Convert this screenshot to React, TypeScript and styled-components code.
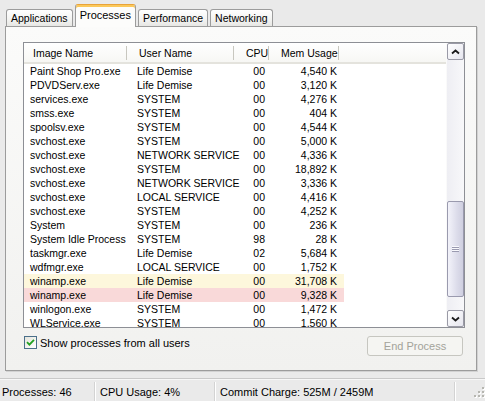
import React, { FunctionComponent } from "react";
import styled, { createGlobalStyle } from "styled-components";

const GlobalStyle = createGlobalStyle`
  html, body {
    margin: 0;
    padding: 0;
    background: #eaeaea;
  }
  body {
    font-family: "Liberation Sans", Arial, sans-serif;
    font-size: 10.5px;
    color: #000;
  }
`;

type Tone = "plain" | "yellow" | "pink";

interface Process {
  name: string;
  user: string;
  cpu: string;
  mem: string;
  tone?: Tone;
}

const processes: Process[] = [
  { name: "Paint Shop Pro.exe", user: "Life Demise", cpu: "00", mem: "4,540 K" },
  { name: "PDVDServ.exe", user: "Life Demise", cpu: "00", mem: "3,120 K" },
  { name: "services.exe", user: "SYSTEM", cpu: "00", mem: "4,276 K" },
  { name: "smss.exe", user: "SYSTEM", cpu: "00", mem: "404 K" },
  { name: "spoolsv.exe", user: "SYSTEM", cpu: "00", mem: "4,544 K" },
  { name: "svchost.exe", user: "SYSTEM", cpu: "00", mem: "5,000 K" },
  { name: "svchost.exe", user: "NETWORK SERVICE", cpu: "00", mem: "4,336 K" },
  { name: "svchost.exe", user: "SYSTEM", cpu: "00", mem: "18,892 K" },
  { name: "svchost.exe", user: "NETWORK SERVICE", cpu: "00", mem: "3,336 K" },
  { name: "svchost.exe", user: "LOCAL SERVICE", cpu: "00", mem: "4,416 K" },
  { name: "svchost.exe", user: "SYSTEM", cpu: "00", mem: "4,252 K" },
  { name: "System", user: "SYSTEM", cpu: "00", mem: "236 K" },
  { name: "System Idle Process", user: "SYSTEM", cpu: "98", mem: "28 K" },
  { name: "taskmgr.exe", user: "Life Demise", cpu: "02", mem: "5,684 K" },
  { name: "wdfmgr.exe", user: "LOCAL SERVICE", cpu: "00", mem: "1,752 K" },
  { name: "winamp.exe", user: "Life Demise", cpu: "00", mem: "31,708 K", tone: "yellow" },
  { name: "winamp.exe", user: "Life Demise", cpu: "00", mem: "9,328 K", tone: "pink" },
  { name: "winlogon.exe", user: "SYSTEM", cpu: "00", mem: "1,472 K" },
  { name: "WLService.exe", user: "SYSTEM", cpu: "00", mem: "1,560 K" },
];

const tabs = ["Applications", "Processes", "Performance", "Networking"];

// scroll state of the list: 46 processes, first visible is #26
const TOTAL = 46;
const FIRST = 26;
const VISIBLE = 17.7;
const TRACK = 250;

const toneColor: Record<Tone, string> = {
  plain: "transparent",
  yellow: "#fdf7dc",
  pink: "#f9d9d9",
};

const Window = styled.div`
  width: 485px;
  height: 401px;
  display: flex;
  flex-direction: column;
  background: #eaeaea;
  overflow: hidden;
`;

const Body = styled.div`
  display: flex;
  flex-direction: column;
  padding: 4px 8px 7px 5px;
  flex: 1;
`;

const TabStrip = styled.div`
  display: flex;
  align-items: flex-end;
  gap: 2px;
  height: 22px;
  padding-left: 1px;
`;

const Tab = styled.div<{ $active?: boolean }>`
  position: relative;
  z-index: ${(p) => (p.$active ? 2 : 1)};
  display: flex;
  align-items: center;
  box-sizing: border-box;
  height: ${(p) => (p.$active ? "23px" : "17px")};
  margin-bottom: ${(p) => (p.$active ? "-1px" : "0")};
  padding: ${(p) => (p.$active ? "0 4px 2px" : "0 4px")};
  border: 1px solid #9c9c9c;
  border-bottom: none;
  border-top-color: ${(p) => (p.$active ? "#e8a33a" : "#9c9c9c")};
  border-radius: 3px 3px 0 0;
  background: ${(p) =>
    p.$active
      ? "#fcfcfb"
      : "linear-gradient(#ffffff, #f3f3f1 60%, #e7e7e4)"};
  box-shadow: ${(p) => (p.$active ? "inset 0 2px 0 #fbc85a" : "none")};
  font-size: ${(p) => (p.$active ? "11px" : "10.5px")};
  white-space: nowrap;
`;

const Panel = styled.div`
  flex: 1;
  display: flex;
  flex-direction: column;
  border: 1px solid #9c9c9c;
  box-shadow: 1px 1px 0 #d2d2d2;
  background: linear-gradient(#fbfbfa, #f1f1ef);
  padding: 15px 11px 0 17px;
`;

const ListBox = styled.div`
  display: flex;
  height: 286px;
  box-sizing: border-box;
  border: 1px solid #8d8f95;
  background: #fff;
`;

const ListMain = styled.div`
  flex: 1;
  display: flex;
  flex-direction: column;
  overflow: hidden;
`;

const Header = styled.div`
  display: flex;
  height: 21px;
  box-sizing: border-box;
  flex-shrink: 0;
  background: linear-gradient(#ffffff, #f7f7f4);
  border-bottom: 2px solid #e4e3dd;
`;

const HeadCell = styled.div<{ $width?: number }>`
  box-sizing: border-box;
  width: ${(p) => (p.$width ? `${p.$width}px` : "auto")};
  flex: ${(p) => (p.$width ? "none" : "1")};
  padding-left: 9px;
  display: flex;
  align-items: center;
  background: ${(p) =>
    p.$width
      ? "linear-gradient(#c8c7bf, #c8c7bf) no-repeat right 3px top 3px / 1px 14px"
      : "none"};
  white-space: nowrap;
  overflow: hidden;
`;

const Rows = styled.div`
  flex: 1;
  overflow: hidden;
`;

const Row = styled.div<{ $tone: Tone }>`
  display: grid;
  grid-template-columns: 106px 107px 35px 70px;
  width: 320px;
  height: 14px;
  line-height: 14px;
  background: ${(p) => toneColor[p.$tone]};
  white-space: nowrap;
`;

const Cell = styled.div<{ $align?: "left" | "right"; $inset: number }>`
  text-align: ${(p) => p.$align ?? "left"};
  padding-left: ${(p) => (p.$align === "right" ? 0 : p.$inset)}px;
  padding-right: ${(p) => (p.$align === "right" ? p.$inset : 0)}px;
  overflow: visible;
`;

const ScrollBar = styled.div`
  width: 17px;
  display: flex;
  flex-direction: column;
  background: #f4f4f6;
  border-left: 1px solid #fafafa;
`;

const ScrollButton = styled.div`
  height: 17px;
  box-sizing: border-box;
  flex-shrink: 0;
  display: flex;
  align-items: center;
  justify-content: center;
  border: 1px solid #9a9aa6;
  border-radius: 2px;
  background: linear-gradient(135deg, #ffffff, #e6e6ee);
`;

const Track = styled.div`
  flex: 1;
  display: flex;
  flex-direction: column;
  background: linear-gradient(90deg, #eeeef3, #f8f8fa);
`;

const Thumb = styled.div`
  box-sizing: border-box;
  display: flex;
  align-items: center;
  justify-content: center;
  border: 1px solid #9a9aae;
  border-radius: 2px;
  background: linear-gradient(90deg, #f3f3fa, #dcdcea 60%, #cfcfe0);
`;

const BottomRow = styled.div`
  display: flex;
  justify-content: space-between;
  align-items: flex-start;
  margin-top: 8px;
  padding: 0 2px 0 1px;
`;

const CheckLabel = styled.label`
  display: flex;
  align-items: center;
  gap: 3px;
  height: 13px;
  font-size: 11px;
`;

const CheckBox = styled.span`
  width: 13px;
  height: 13px;
  box-sizing: border-box;
  display: flex;
  align-items: center;
  justify-content: center;
  border: 1px solid #4a6f8a;
  background: linear-gradient(135deg, #e4e4dc, #ffffff);
`;

const EndButton = styled.button`
  width: 96px;
  height: 20px;
  box-sizing: border-box;
  padding: 0;
  border: 1px solid #c6c6c0;
  border-radius: 3px;
  background: #f5f5f2;
  color: #a3a39a;
  font-family: "Liberation Sans", Arial, sans-serif;
  font-size: 11px;
`;

const StatusBar = styled.div`
  display: flex;
  height: 23px;
  box-sizing: border-box;
  border-top: 1px solid #c9c9c9;
  box-shadow: inset 0 1px 0 #f7f7f7;
  background: #eaeaea;
  font-size: 11px;
`;

const Pane = styled.div<{ $width?: number; $inset: number }>`
  box-sizing: border-box;
  width: ${(p) => (p.$width ? `${p.$width}px` : "auto")};
  flex: ${(p) => (p.$width ? "none" : "1")};
  margin-top: 3px;
  padding-left: ${(p) => p.$inset}px;
  display: flex;
  align-items: center;
  justify-content: ${(p) => (p.$width ? "flex-start" : "flex-end")};
  border-right: ${(p) => (p.$width ? "1px solid #d3d3d3" : "none")};
  box-shadow: ${(p) => (p.$width ? "1px 0 0 #ffffff" : "none")};
  white-space: nowrap;
`;

const Chevron: FunctionComponent<{ down?: boolean }> = ({ down }) => (
  <svg width="9" height="6" viewBox="0 0 9 6">
    <path
      d={down ? "M1 1.5 L4.5 4.5 L8 1.5" : "M1 4.5 L4.5 1.5 L8 4.5"}
      fill="none"
      stroke="#1a1a1a"
      strokeWidth="1.8"
    />
  </svg>
);

const Grip = () => (
  <svg width="8" height="6" viewBox="0 0 8 6">
    {[0, 2, 4].map((y) => (
      <g key={y}>
        <rect x="0" y={y} width="7" height="1" fill="#f8f8fc" />
        <rect x="0" y={y + 1} width="7" height="1" fill="#9a9ab0" />
      </g>
    ))}
  </svg>
);

const SizeGrip = () => (
  <svg width="12" height="12" viewBox="0 0 12 12">
    {[
      [9, 1],
      [9, 5],
      [5, 5],
      [9, 9],
      [5, 9],
      [1, 9],
    ].map(([x, y]) => (
      <g key={`${x}-${y}`}>
        <rect x={x + 1} y={y + 1} width="2" height="2" fill="#ffffff" />
        <rect x={x} y={y} width="2" height="2" fill="#b6b6b0" />
      </g>
    ))}
  </svg>
);

const App: FunctionComponent = () => {
  const thumbTop = Math.round((TRACK * FIRST) / TOTAL);
  const thumbHeight = Math.round((TRACK * VISIBLE) / TOTAL);

  return (
    <>
      <GlobalStyle />
      <Window>
        <Body>
          <TabStrip>
            {tabs.map((t) => (
              <Tab key={t} $active={t === "Processes"}>
                {t}
              </Tab>
            ))}
          </TabStrip>
          <Panel>
            <ListBox>
              <ListMain>
                <Header>
                  <HeadCell $width={106}>Image Name</HeadCell>
                  <HeadCell $width={107}>User Name</HeadCell>
                  <HeadCell $width={35}>CPU</HeadCell>
                  <HeadCell $width={70}>Mem Usage</HeadCell>
                  <HeadCell />
                </Header>
                <Rows>
                  {processes.map((p, i) => (
                    <Row key={i} $tone={p.tone ?? "plain"}>
                      <Cell $inset={6}>{p.name}</Cell>
                      <Cell $inset={7}>{p.user}</Cell>
                      <Cell $align="right" $inset={7}>
                        {p.cpu}
                      </Cell>
                      <Cell $align="right" $inset={5}>
                        {p.mem}
                      </Cell>
                    </Row>
                  ))}
                </Rows>
              </ListMain>
              <ScrollBar>
                <ScrollButton>
                  <Chevron />
                </ScrollButton>
                <Track>
                  <Thumb style={{ marginTop: thumbTop, height: thumbHeight }}>
                    <Grip />
                  </Thumb>
                </Track>
                <ScrollButton>
                  <Chevron down />
                </ScrollButton>
              </ScrollBar>
            </ListBox>
            <BottomRow>
              <CheckLabel>
                <CheckBox>
                  <svg width="9" height="9" viewBox="0 0 9 9">
                    <path
                      d="M1 4.2 L3.4 6.6 L8 1.8"
                      fill="none"
                      stroke="#21a121"
                      strokeWidth="1.8"
                    />
                  </svg>
                </CheckBox>
                Show processes from all users
              </CheckLabel>
              <EndButton disabled>End Process</EndButton>
            </BottomRow>
          </Panel>
        </Body>
        <StatusBar>
          <Pane $width={95} $inset={2}>
            Processes: 46
          </Pane>
          <Pane $width={120} $inset={5}>
            CPU Usage: 4%
          </Pane>
          <Pane $width={240} $inset={5}>
            Commit Charge: 525M / 2459M
          </Pane>
          <Pane $inset={0}>
            <SizeGrip />
          </Pane>
        </StatusBar>
      </Window>
    </>
  );
};

export default App;
